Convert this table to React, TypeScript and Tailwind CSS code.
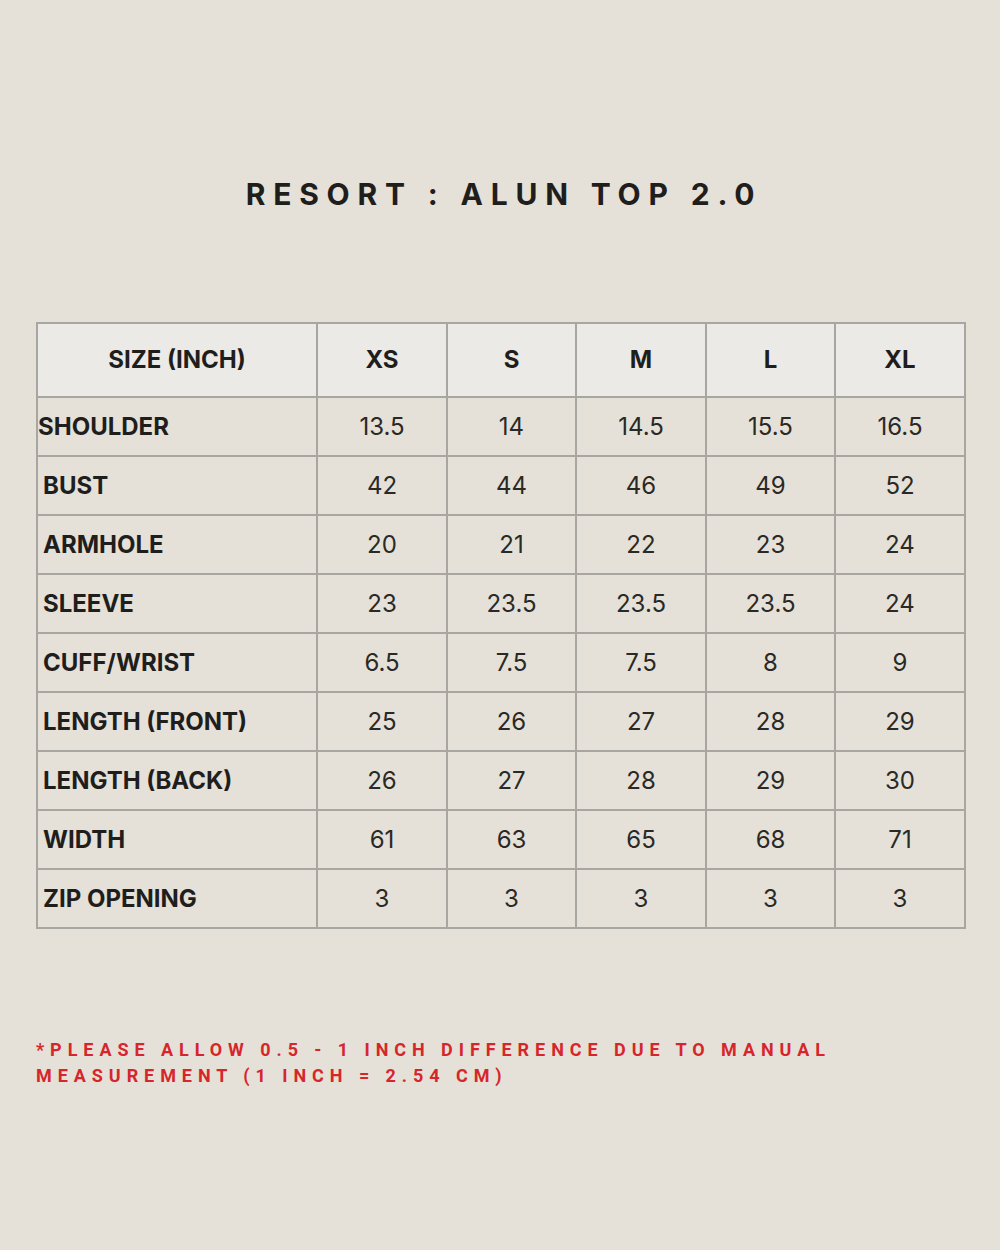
const sizes = ['XS', 'S', 'M', 'L', 'XL']

const rows: { label: string; values: string[]; tight?: boolean }[] = [
  { label: 'SHOULDER', values: ['13.5', '14', '14.5', '15.5', '16.5'], tight: true },
  { label: 'BUST', values: ['42', '44', '46', '49', '52'] },
  { label: 'ARMHOLE', values: ['20', '21', '22', '23', '24'] },
  { label: 'SLEEVE', values: ['23', '23.5', '23.5', '23.5', '24'] },
  { label: 'CUFF/WRIST', values: ['6.5', '7.5', '7.5', '8', '9'] },
  { label: 'LENGTH (FRONT)', values: ['25', '26', '27', '28', '29'] },
  { label: 'LENGTH (BACK)', values: ['26', '27', '28', '29', '30'] },
  { label: 'WIDTH', values: ['61', '63', '65', '68', '71'] },
  { label: 'ZIP OPENING', values: ['3', '3', '3', '3', '3'] },
]

export default function App() {
  return (
    <div
      className="w-[1000px] h-[1250px] bg-[#e5e1d8] text-[#1f1e1c] flex flex-col"
      style={{ fontFamily: 'Inter, "Liberation Sans", sans-serif' }}
    >
      <h1 className="mt-[174px] text-center text-[30px] leading-[40px] font-bold tracking-[0.26em] pl-[8px]">
        RESORT : ALUN TOP 2.0
      </h1>

      <div className="mt-[108px] px-[36px]">
        <table className="w-[928px] border-collapse table-fixed">
          <colgroup>
            <col className="w-[280px]" />
            <col className="w-[130px]" />
            <col className="w-[129px]" />
            <col className="w-[130px]" />
            <col className="w-[129px]" />
            <col className="w-[130px]" />
          </colgroup>
          <thead>
            <tr className="h-[74px] bg-[#ebeae6]">
              <th className="border-2 border-[#a8a6a1] text-[24px] font-bold">SIZE (INCH)</th>
              {sizes.map((s) => (
                <th key={s} className="border-2 border-[#a8a6a1] text-[24px] font-bold">
                  {s}
                </th>
              ))}
            </tr>
          </thead>
          <tbody>
            {rows.map((r) => (
              <tr key={r.label} className="h-[59px]">
                <td
                  className={
                    r.tight
                      ? 'border-2 border-[#a8a6a1] text-[24px] font-bold pl-0 text-left'
                      : 'border-2 border-[#a8a6a1] text-[24px] font-bold pl-[5px] text-left'
                  }
                >
                  {r.label}
                </td>
                {r.values.map((v, i) => (
                  <td key={i} className="border-2 border-[#a8a6a1] text-[24px] text-center text-[#2a2926]">
                    {v}
                  </td>
                ))}
              </tr>
            ))}
          </tbody>
        </table>
      </div>

      <p
        className="mt-[108px] px-[36px] text-[#d7262b] text-[18px] leading-[26px] font-bold tracking-[0.33em] w-[900px]"
        style={{ fontFamily: 'Roboto, "Liberation Sans", sans-serif' }}
      >
        *PLEASE ALLOW 0.5 - 1 INCH DIFFERENCE DUE TO MANUAL MEASUREMENT (1 INCH = 2.54 CM)
      </p>
    </div>
  )
}
